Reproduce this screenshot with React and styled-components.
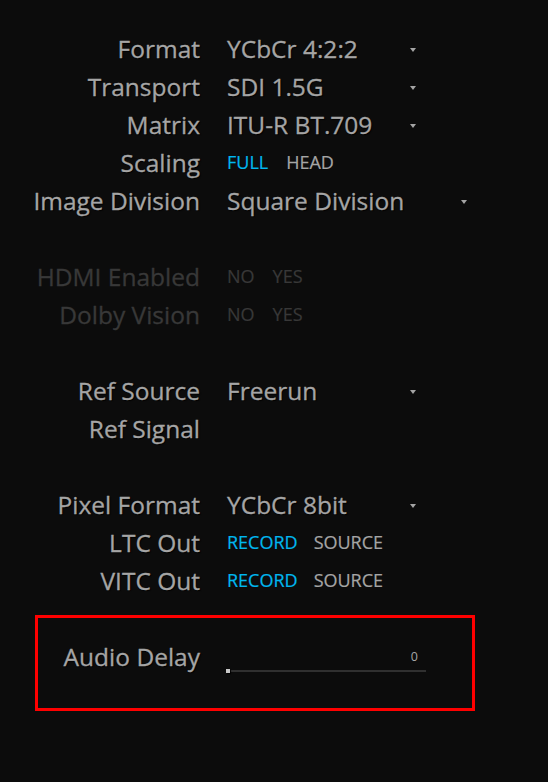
import React from "react";
import styled, { createGlobalStyle } from "styled-components";

const GlobalStyle = createGlobalStyle`
	html, body {
		margin: 0;
		padding: 0;
		background: #0c0c0c;
		font-family: "Open Sans", "Noto Sans", sans-serif;
	}
`;

const Panel = styled.div`
	width: 548px;
	height: 782px;
	box-sizing: border-box;
	padding-top: 29px;
	background: #0c0c0c;
	display: flex;
	flex-direction: column;
`;

const Row = styled.div`
	display: grid;
	grid-template-columns: 200px 1fr;
	column-gap: 27px;
	align-items: center;
	height: 38px;
`;

const Spacer = styled.div`
	height: 38px;
`;

const Label = styled.div`
	text-align: right;
	font-size: 24.5px;
	color: ${(p) => (p.dim ? "#383838" : "#a5a5a5")};
	-webkit-text-stroke: 0.3px ${(p) => (p.dim ? "#383838" : "#a5a5a5")};
	text-shadow: ${(p) => (p.dim ? "none" : "1px 1px 1px #000")};
	white-space: nowrap;
`;

const Select = styled.div`
	width: ${(p) => p.w}px;
	display: flex;
	align-items: center;
	justify-content: space-between;
	font-size: 24.5px;
	color: #a5a5a5;
	-webkit-text-stroke: 0.3px #a5a5a5;
	text-shadow: 1px 1px 1px #000;
	white-space: nowrap;
`;

const Arrow = styled.span`
	width: 0;
	height: 0;
	margin-top: 4px;
	border-left: 3.5px solid transparent;
	border-right: 3.5px solid transparent;
	border-top: 4px solid #a5a5a5;
`;

const Options = styled.div`
	display: flex;
	gap: ${(p) => p.gap || 16}px;
`;

const Option = styled.span`
	font-size: 18px;
	color: ${(p) => (p.active ? "#00b7ef" : p.dim ? "#383838" : "#a5a5a5")};
	-webkit-text-stroke: 0.2px currentColor;
	white-space: nowrap;
`;

const Highlight = styled.div`
	margin: 16px 0 0 35px;
	width: 440px;
	height: 96px;
	box-sizing: border-box;
	border: 3px solid #ff0000;
	padding-top: 19px;
`;

const SliderRow = styled(Row)`
	grid-template-columns: 162px 1fr;
`;

const Slider = styled.div`
	position: relative;
	width: 199px;
	height: 38px;
`;

const Track = styled.div`
	position: absolute;
	left: 2px;
	right: 0;
	top: 33px;
	height: 2px;
	background: #303030;
`;

const Thumb = styled.div`
	position: absolute;
	left: -1px;
	top: 32px;
	width: 4px;
	height: 4px;
	background: #c8c8c8;
	box-shadow: 1px 1px 1px #000;
`;

const SliderValue = styled.span`
	position: absolute;
	right: 8px;
	top: 11px;
	font-size: 12.5px;
	color: #a5a5a5;
`;

const DropRow = ({ label, value, w = 189 }) => (
	<Row>
		<Label>{label}</Label>
		<Select w={w}>
			<span>{value}</span>
			<Arrow />
		</Select>
	</Row>
);

const ToggleRow = ({ label, options, active, dim, gap }) => (
	<Row>
		<Label dim={dim}>{label}</Label>
		<Options gap={gap}>
			{options.map((o) => (
				<Option key={o} active={o === active} dim={dim}>
					{o}
				</Option>
			))}
		</Options>
	</Row>
);

const App = () => {
	return (
		<Panel>
			<GlobalStyle />
			<DropRow label="Format" value="YCbCr 4:2:2" />
			<DropRow label="Transport" value="SDI 1.5G" />
			<DropRow label="Matrix" value="ITU-R BT.709" />
			<ToggleRow label="Scaling" options={["FULL", "HEAD"]} active="FULL" gap={18} />
			<DropRow label="Image Division" value="Square Division" w={240} />
			<Spacer />
			<ToggleRow label="HDMI Enabled" options={["NO", "YES"]} dim gap={18} />
			<ToggleRow label="Dolby Vision" options={["NO", "YES"]} dim gap={18} />
			<Spacer />
			<DropRow label="Ref Source" value="Freerun" />
			<Row>
				<Label>Ref Signal</Label>
				<div />
			</Row>
			<Spacer />
			<DropRow label="Pixel Format" value="YCbCr 8bit" />
			<ToggleRow label="LTC Out" options={["RECORD", "SOURCE"]} active="RECORD" />
			<ToggleRow label="VITC Out" options={["RECORD", "SOURCE"]} active="RECORD" />
			<Highlight>
				<SliderRow>
					<Label>Audio Delay</Label>
					<Slider>
						<SliderValue>0</SliderValue>
						<Track />
						<Thumb />
					</Slider>
				</SliderRow>
			</Highlight>
		</Panel>
	);
};

export default App;
